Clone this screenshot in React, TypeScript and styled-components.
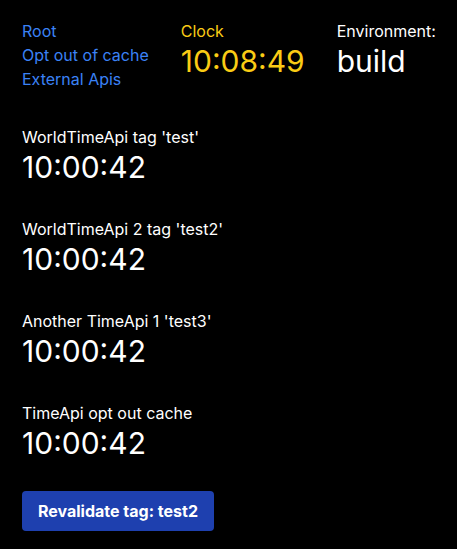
import React from 'react';
import styled, { createGlobalStyle } from 'styled-components';

const GlobalStyle = createGlobalStyle`
    html, body {
        margin: 0;
        padding: 0;
        background: #000;
    }
    body {
        font-family: Inter, "Noto Sans", sans-serif;
        color: #fff;
    }
`

const Page = styled.main`
    min-height: 549px;
    box-sizing: border-box;
    padding: 19px 22px;
    background: #000;
`

const TopRow = styled.div`
    display: flex;
    gap: 32px;
    align-items: flex-start;
`

const NavList = styled.nav`
    display: flex;
    flex-direction: column;
    flex-shrink: 0;
`

const NavLink = styled.a`
    font-size: 16px;
    line-height: 24px;
    color: #3b82f6;
    text-decoration: none;
    white-space: nowrap;
`

const Column = styled.div`
    display: flex;
    flex-direction: column;
    flex-shrink: 0;
`

const Label = styled.div<{ colour?: string }>`
    font-size: 16px;
    line-height: 24px;
    color: ${(p) => p.colour || '#fff'};
    white-space: nowrap;
`

const BigValue = styled.div<{ colour?: string }>`
    font-size: 30px;
    line-height: 36px;
    color: ${(p) => p.colour || '#fff'};
`

const Sections = styled.div`
    display: flex;
    flex-direction: column;
    gap: 32px;
    margin-top: 34px;
`

const Section = styled.section`
    display: flex;
    flex-direction: column;
`

const Button = styled.button`
    margin-top: 30px;
    height: 40px;
    padding: 0 16px;
    border: none;
    border-radius: 4px;
    background: #1e40af;
    color: #fff;
    font-family: Inter, "Noto Sans", sans-serif;
    font-weight: 700;
    font-size: 16px;
    cursor: pointer;
`

const apis = [
    { title: "WorldTimeApi tag 'test'", time: '10:00:42' },
    { title: "WorldTimeApi 2 tag 'test2'", time: '10:00:42' },
    { title: "Another TimeApi 1 'test3'", time: '10:00:42' },
    { title: 'TimeApi opt out cache', time: '10:00:42' },
];

export default function App() {
    return (
        <>
            <GlobalStyle />
            <Page>
                <TopRow>
                    <NavList>
                        <NavLink href="#">Root</NavLink>
                        <NavLink href="#">Opt out of cache</NavLink>
                        <NavLink href="#">External Apis</NavLink>
                    </NavList>
                    <Column>
                        <Label colour="#facc15">Clock</Label>
                        <BigValue colour="#facc15">10:08:49</BigValue>
                    </Column>
                    <Column>
                        <Label>Environment:</Label>
                        <BigValue>build</BigValue>
                    </Column>
                </TopRow>
                <Sections>
                    {apis.map((api) => (
                        <Section key={api.title}>
                            <Label>{api.title}</Label>
                            <BigValue>{api.time}</BigValue>
                        </Section>
                    ))}
                </Sections>
                <Button>Revalidate tag: test2</Button>
            </Page>
        </>
    );
}
